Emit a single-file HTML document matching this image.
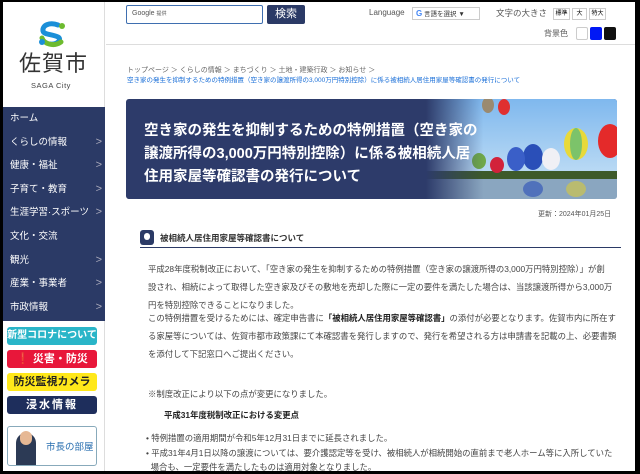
<!DOCTYPE html>
<html><head><meta charset="utf-8"><style>
*{margin:0;padding:0;box-sizing:border-box}
body{width:640px;height:474px;overflow:hidden;background:#000;font-family:"Liberation Sans","Noto Sans CJK JP",sans-serif;position:relative}
.page{position:absolute;left:3px;top:2px;width:632px;height:469px;background:#fff;overflow:hidden}
.abs{position:absolute}
.side{position:absolute;left:0;top:0;width:102px;height:469px;background:#fff;border-right:1px solid #ddd}
.nav{position:absolute;left:0;top:105px;width:102px;height:214px;background:#2b3a66}
.nav div{height:23.6px;line-height:23.6px;color:#fff;font-size:9.5px;padding-left:7px;position:relative;white-space:nowrap}
.nav div span{position:absolute;right:3px;top:0;color:#aab;font-size:11px}
.bn{position:absolute;left:4px;width:90px;height:18px;border-radius:3px;font-weight:bold;font-size:11px;line-height:18px;text-align:center;white-space:nowrap}
.crumb{font-size:7px;color:#666}
.p{font-size:8.4px;color:#444;line-height:18px;position:absolute;left:145px;white-space:nowrap}
</style></head><body><div class="page">
<div class="side">
 <svg class="abs" style="left:33px;top:18px" width="32" height="28" viewBox="0 0 32 28">
  <path d="M22 5 C14 2 6 5 7 11 C8 15 16 14 22 17 C26 19 22 25 14 24" stroke="#1b8fd8" stroke-width="5" fill="none" stroke-linecap="round"/>
  <path d="M6 18 C8 24 18 27 25 22" stroke="#6dbb2f" stroke-width="5" fill="none" stroke-linecap="round"/>
  <circle cx="26" cy="6" r="3" fill="#6dbb2f"/><circle cx="6" cy="22" r="3" fill="#1b8fd8"/>
 </svg>
 <div class="abs" style="left:16px;top:50px;font-size:22px;line-height:24px;color:#333;letter-spacing:1px">佐賀市</div>
 <div class="abs" style="left:28px;top:79px;font-size:7.5px;line-height:9px;color:#444;letter-spacing:.5px">SAGA City</div>
 <div class="nav">
  <div>ホーム</div><div>くらしの情報<span>&gt;</span></div><div>健康・福祉<span>&gt;</span></div><div>子育て・教育<span>&gt;</span></div><div>生涯学習·スポーツ<span>&gt;</span></div><div>文化・交流</div><div>観光<span>&gt;</span></div><div>産業・事業者<span>&gt;</span></div><div>市政情報<span>&gt;</span></div>
 </div>
 <div class="bn" style="top:325px;background:#29b5c8;color:#fff;font-size:10px">新型コロナについて</div>
 <div class="bn" style="top:348px;background:#e8173a;color:#fff">❗ 災害・防災</div>
 <div class="bn" style="top:371px;background:#ffe81a;color:#222">防災監視カメラ</div>
 <div class="bn" style="top:394px;background:#1e2e5c;color:#fff;letter-spacing:2px">浸水情報</div>
 <div class="abs" style="left:4px;top:424px;width:90px;height:40px;border:1px solid #8ab;border-radius:3px;overflow:hidden">
  <div class="abs" style="left:8px;top:6px;width:20px;height:36px;background:#2c3a55;border-radius:10px 10px 0 0"></div>
  <div class="abs" style="left:12px;top:4px;width:12px;height:14px;background:#e6b894;border-radius:6px"></div>
  <div class="abs" style="left:38px;top:12px;font-size:9.5px;color:#2a6fb0">市長の部屋</div>
 </div>
</div>
<div class="abs" style="left:103px;top:42px;width:529px;height:1px;background:#ddd"></div>
<div class="abs" style="left:123px;top:3px;width:137px;height:19px;border:1px solid #3f6fb0;border-radius:2px;font-size:7px;color:#555;padding:4px 5px">Google <span style="font-size:5px">提供</span></div>
<div class="abs" style="left:264px;top:3px;width:38px;height:19px;background:#2b3a66;color:#fff;border-radius:2px;font-size:11px;text-align:center;line-height:19px">検索</div>
<div class="abs" style="left:366px;top:6px;font-size:8px;color:#555">Language</div>
<div class="abs" style="left:409px;top:5px;width:68px;height:13px;border:1px solid #ccc;font-size:6.5px;color:#333;line-height:11px;padding-left:3px"><b style="color:#4285f4;font-size:8px">G</b> 言語を選択 ▼</div>
<div class="abs" style="left:493px;top:5px;font-size:8.5px;color:#555">文字の大きさ</div>
<div class="abs" style="left:550px;top:6px;width:17px;height:12px;border:1px solid #ccc;font-size:6px;text-align:center;line-height:10px">標準</div>
<div class="abs" style="left:569px;top:6px;width:15px;height:12px;border:1px solid #ccc;font-size:6px;text-align:center;line-height:10px">大</div>
<div class="abs" style="left:586px;top:6px;width:17px;height:12px;border:1px solid #ccc;font-size:6px;text-align:center;line-height:10px">特大</div>
<div class="abs" style="left:541px;top:26px;font-size:8px;color:#555">背景色</div>
<div class="abs" style="left:573px;top:25px;width:12px;height:13px;border:1px solid #ccc;background:#fff;border-radius:2px"></div>
<div class="abs" style="left:587px;top:25px;width:12px;height:13px;background:#0018f5;border-radius:2px"></div>
<div class="abs" style="left:601px;top:25px;width:12px;height:13px;background:#111;border-radius:2px"></div>
<div class="abs crumb" style="left:124px;top:63px">トップページ ＞ くらしの情報 ＞ まちづくり ＞ 土地・建築行政 ＞ お知らせ ＞</div>
<div class="abs" style="left:124px;top:72px;font-size:6.5px;color:#1a6fd8;white-space:nowrap">空き家の発生を抑制するための特例措置（空き家の譲渡所得の3,000万円特別控除）に係る被相続人居住用家屋等確認書の発行について</div>
<div class="abs" style="left:123px;top:97px;width:491px;height:100px;background:#2d3b6a;border-radius:3px;overflow:hidden">
 <svg class="abs" style="left:300px;top:0" width="191" height="100" viewBox="0 0 191 100">
  <defs><linearGradient id="sk" x1="0" x2="0" y1="0" y2="1"><stop offset="0" stop-color="#7fb8ee"/><stop offset="1" stop-color="#cfe6f6"/></linearGradient>
  <linearGradient id="fd" x1="0" x2="1"><stop offset="0" stop-color="#2d3b6a"/><stop offset=".3" stop-color="#2d3b6a" stop-opacity="0"/></linearGradient></defs>
  <rect width="191" height="100" fill="url(#sk)"/>
  <rect y="72" width="191" height="8" fill="#3d5a2a"/>
  <rect y="80" width="191" height="20" fill="#8aa6c0"/>
  <ellipse cx="150" cy="45" rx="12" ry="16" fill="#e8d93a"/><ellipse cx="150" cy="45" rx="6" ry="16" fill="#7cc36a"/>
  <ellipse cx="184" cy="42" rx="12" ry="17" fill="#e42a2a"/>
  <ellipse cx="107" cy="58" rx="10" ry="13" fill="#2a4fb8"/><ellipse cx="125" cy="60" rx="9" ry="11" fill="#f0f0f5"/>
  <ellipse cx="90" cy="60" rx="9" ry="12" fill="#3a5fc8"/><ellipse cx="71" cy="66" rx="7" ry="8" fill="#d2223a"/>
  <ellipse cx="53" cy="62" rx="7" ry="8" fill="#6fa84a"/>
  <ellipse cx="78" cy="8" rx="6" ry="8" fill="#e03030"/><ellipse cx="62" cy="6" rx="6" ry="8" fill="#9a8a70"/>
  <ellipse cx="107" cy="90" rx="10" ry="8" fill="#2a4fb8" opacity=".6"/><ellipse cx="150" cy="90" rx="10" ry="8" fill="#d8c93a" opacity=".6"/>
  <rect width="191" height="100" fill="url(#fd)"/>
 </svg>
 <div class="abs" style="left:18px;top:21px;color:#fff;font-weight:bold;font-size:14.5px;line-height:23px;white-space:nowrap">空き家の発生を抑制するための特例措置（空き家の<br>譲渡所得の3,000万円特別控除）に係る被相続人居<br>住用家屋等確認書の発行について</div>
</div>
<div class="abs" style="left:535px;top:207px;font-size:7px;color:#555">更新：2024年01月25日</div>
<div class="abs" style="left:137px;top:228px;width:14px;height:15px;background:#2b3a66;border-radius:3px"><div class="abs" style="left:4px;top:3px;width:6px;height:7px;background:#fff;border-radius:3px"></div></div>
<div class="abs" style="left:157px;top:230px;font-size:8.5px;font-weight:bold;color:#333">被相続人居住用家屋等確認書について</div>
<div class="abs" style="left:137px;top:245px;width:481px;height:1px;background:#2b3a66"></div>
<div class="p" style="top:258px">平成28年度税制改正において、「空き家の発生を抑制するための特例措置（空き家の譲渡所得の3,000万円特別控除）」が創<br>設され、相続によって取得した空き家及びその敷地を売却した際に一定の要件を満たした場合は、当該譲渡所得から3,000万<br>円を特別控除できることになりました。</div>
<div class="p" style="top:307px">この特例措置を受けるためには、確定申告書に<b style="color:#222">「被相続人居住用家屋等確認書」</b>の添付が必要となります。佐賀市内に所在す<br>る家屋等については、佐賀市都市政策課にて本確認書を発行しますので、発行を希望される方は申請書を記載の上、必要書類<br>を添付して下記窓口へご提出ください。</div>
<div class="p" style="top:383px">※制度改正により以下の点が変更になりました。</div>
<div class="p" style="top:404px;left:161px;font-weight:bold;color:#222">平成31年度税制改正における変更点</div>
<div class="p" style="top:427px;left:143px">• 特例措置の適用期間が令和5年12月31日までに延長されました。</div>
<div class="p" style="top:444px;left:143px;line-height:14px">• 平成31年4月1日以降の譲渡については、要介護認定等を受け、被相続人が相続開始の直前まで老人ホーム等に入所していた<br>&nbsp;&nbsp;場合も、一定要件を満たしたものは適用対象となりました。</div>
</div></body></html>
